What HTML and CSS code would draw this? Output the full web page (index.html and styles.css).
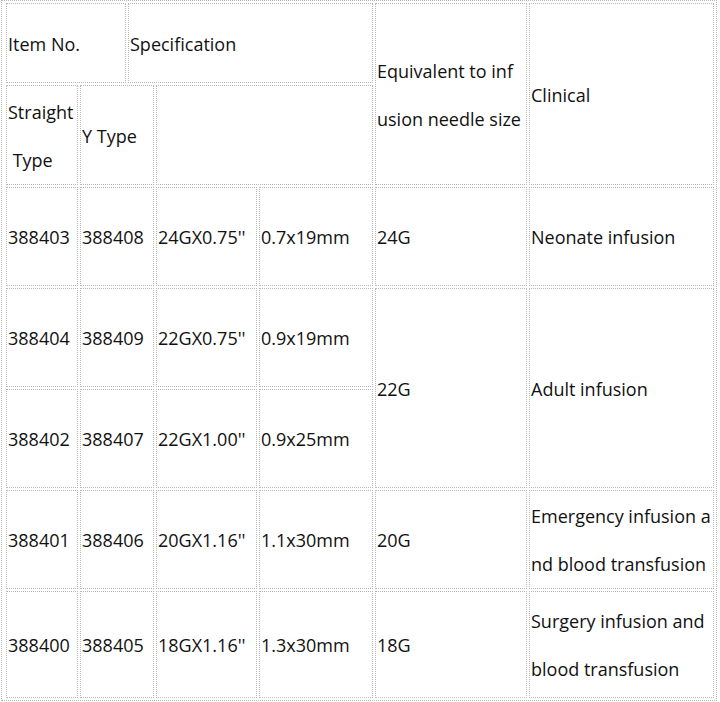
FILE: index.html
```html
<!DOCTYPE html>
<html>
<head>
<meta charset="utf-8">
<link rel="stylesheet" href="styles.css">
</head>
<body>
<div class="spec-table">
  <div class="cell span2">Item No.</div>
  <div class="cell span3">Specification</div>
  <div class="cell rspan2">Equivalent to inf<br>usion needle size</div>
  <div class="cell rspan2">Clinical</div>

  <div class="cell">Straight<br>&nbsp;Type</div>
  <div class="cell span2">Y Type</div>
  <div class="cell span2"></div>

  <div class="cell">388403</div>
  <div class="cell span2">388408</div>
  <div class="cell">24GX0.75''</div>
  <div class="cell">0.7x19mm</div>
  <div class="cell">24G</div>
  <div class="cell">Neonate infusion</div>

  <div class="cell">388404</div>
  <div class="cell span2">388409</div>
  <div class="cell">22GX0.75''</div>
  <div class="cell">0.9x19mm</div>
  <div class="cell rspan2">22G</div>
  <div class="cell rspan2">Adult infusion</div>

  <div class="cell">388402</div>
  <div class="cell span2">388407</div>
  <div class="cell">22GX1.00''</div>
  <div class="cell">0.9x25mm</div>

  <div class="cell">388401</div>
  <div class="cell span2">388406</div>
  <div class="cell">20GX1.16''</div>
  <div class="cell">1.1x30mm</div>
  <div class="cell">20G</div>
  <div class="cell">Emergency infusion a<br>nd blood transfusion</div>

  <div class="cell">388400</div>
  <div class="cell span2">388405</div>
  <div class="cell">18GX1.16''</div>
  <div class="cell">1.3x30mm</div>
  <div class="cell">18G</div>
  <div class="cell">Surgery infusion and<br>blood transfusion</div>
</div>
</body>
</html>
```

FILE: styles.css
```css
html, body {
  margin: 0;
  padding: 0;
  background: #ffffff;
}

body {
  font-family: "Open Sans", "Noto Sans", sans-serif;
  font-size: 18px;
  color: #111111;
}

.spec-table {
  display: grid;
  width: 716px;
  box-sizing: border-box;
  margin: 0 0 0 1px;
  padding: 2px 2px 2px 4px;
  gap: 2px;
  border: 1px dotted #b8b8b8;
  grid-template-columns: 72px 46px 26px 101px 114px 152px 185px;
  grid-template-rows: 80px 100px 99px 99px 99px 99px 107px;
}

.cell {
  border: 1px dotted #b8b8b8;
  display: flex;
  align-items: center;
  padding-left: 1px;
  padding-top: 1px;
  line-height: 48px;
  white-space: nowrap;
  overflow: hidden;
}

.span2 {
  grid-column: span 2;
}

.span3 {
  grid-column: span 3;
}

.rspan2 {
  grid-row: span 2;
}
```
